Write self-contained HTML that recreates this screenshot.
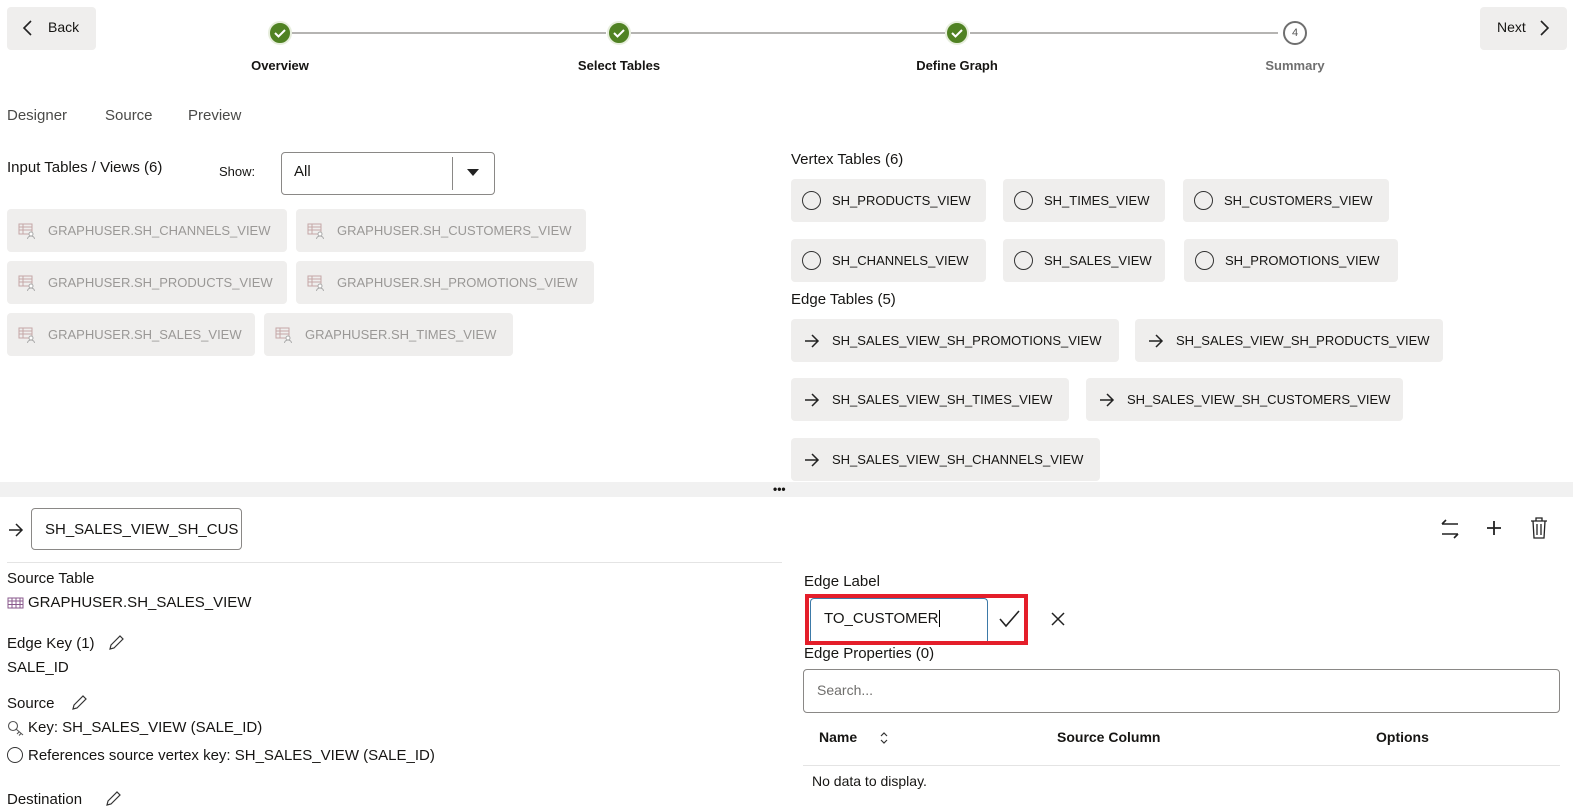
<!DOCTYPE html>
<html><head><meta charset="utf-8"><style>
*{margin:0;padding:0;box-sizing:border-box}
body{width:1573px;height:811px;overflow:hidden;background:#fff;font-family:"Liberation Sans",sans-serif;color:#161513;position:relative}
.a{position:absolute;white-space:nowrap}
.chip{position:absolute;background:#efeeed;border-radius:4px;height:43px;font-size:13px;display:flex;align-items:center;white-space:nowrap}
.in{color:#9a9896;padding-left:41px}
.in svg{position:absolute;left:11px;top:13px}
.v{padding-left:41px;color:#161513}
.v:before{content:"";position:absolute;left:11px;top:12px;width:17px;height:17px;border:1.4px solid #333;border-radius:50%}
.e{padding-left:41px}
.e svg{position:absolute;left:13px;top:15px}
.step{position:absolute;top:21px;width:24px;height:24px;border-radius:50%;background:#508223;border:2px solid #e7eedd}
.lbl{position:absolute;top:58px;font-size:13px;font-weight:bold;transform:translateX(-50%)}
.tf{font-size:15px}
</style></head><body>
<div class="a" style="left:7px;top:7px;width:89px;height:43px;background:#efeeed;border-radius:4px"></div>
<svg class="a" style="left:22px;top:19px" width="12" height="18"><path d="M9 2L2 9l7 7" fill="none" stroke="#222" stroke-width="1.6"/></svg>
<div class="a" style="left:48px;top:19px;font-size:14px">Back</div>
<div class="a" style="left:1480px;top:7px;width:87px;height:43px;background:#efeeed;border-radius:4px"></div>
<div class="a" style="left:1497px;top:19px;font-size:14px">Next</div>
<svg class="a" style="left:1538px;top:19px" width="12" height="18"><path d="M3 2l7 7-7 7" fill="none" stroke="#222" stroke-width="1.6"/></svg>
<div class="a" style="left:292px;top:32px;width:314px;height:2px;background:#b5b4b2"></div>
<div class="a" style="left:631px;top:32px;width:314px;height:2px;background:#b5b4b2"></div>
<div class="a" style="left:970px;top:32px;width:308px;height:2px;background:#b5b4b2"></div>
<div class="step" style="left:268px"></div><div class="step" style="left:607px"></div><div class="step" style="left:945px"></div>
<svg class="a" style="left:268px;top:21px" width="24" height="24"><path d="M7 12l3.5 3.5L17 9" fill="none" stroke="#fff" stroke-width="2"/></svg>
<svg class="a" style="left:607px;top:21px" width="24" height="24"><path d="M7 12l3.5 3.5L17 9" fill="none" stroke="#fff" stroke-width="2"/></svg>
<svg class="a" style="left:945px;top:21px" width="24" height="24"><path d="M7 12l3.5 3.5L17 9" fill="none" stroke="#fff" stroke-width="2"/></svg>
<div class="a" style="left:1283px;top:21px;width:24px;height:24px;border-radius:50%;border:2px solid #6f6f6f;font-size:11px;text-align:center;line-height:20px;color:#555">4</div>
<div class="lbl" style="left:280px">Overview</div>
<div class="lbl" style="left:619px">Select Tables</div>
<div class="lbl" style="left:957px">Define Graph</div>
<div class="lbl" style="left:1295px;color:#6f6f6f">Summary</div>
<div class="a" style="left:7px;top:107px;font-size:15px;color:#4a4a48">Designer</div>
<div class="a" style="left:105px;top:107px;font-size:15px;color:#4a4a48">Source</div>
<div class="a" style="left:188px;top:107px;font-size:15px;color:#4a4a48">Preview</div>
<div class="a tf" style="left:7px;top:159px">Input Tables / Views (6)</div>
<div class="a" style="left:219px;top:164px;font-size:13px">Show:</div>
<div class="a" style="left:281px;top:152px;width:214px;height:43px;border:1px solid #8a8886;border-radius:4px"></div>
<div class="a" style="left:294px;top:163px;font-size:15px">All</div>
<div class="a" style="left:452px;top:157px;width:1px;height:33px;background:#8a8886"></div>
<svg class="a" style="left:467px;top:169px" width="12" height="8"><path d="M0 0h12L6 7z" fill="#222"/></svg>
<svg width="0" height="0" style="position:absolute"><defs><symbol id="tb" viewBox="0 0 18 18"><path d="M1 2h13v10H1zM1 5h13M1 8h13M5 2v10" fill="none" stroke="#c4a7a6" stroke-width="1"/><circle cx="13" cy="12" r="2" fill="#fff" stroke="#aaa"/><path d="M9.5 17a3.5 3 0 017 0" fill="none" stroke="#aaa"/></symbol></defs></svg>
<div class="chip in" style="left:7px;top:209px;width:280px"><svg width="18" height="18"><use href="#tb"/></svg>GRAPHUSER.SH_CHANNELS_VIEW</div>
<div class="chip in" style="left:296px;top:209px;width:290px"><svg width="18" height="18"><use href="#tb"/></svg>GRAPHUSER.SH_CUSTOMERS_VIEW</div>
<div class="chip in" style="left:7px;top:261px;width:280px"><svg width="18" height="18"><use href="#tb"/></svg>GRAPHUSER.SH_PRODUCTS_VIEW</div>
<div class="chip in" style="left:296px;top:261px;width:298px"><svg width="18" height="18"><use href="#tb"/></svg>GRAPHUSER.SH_PROMOTIONS_VIEW</div>
<div class="chip in" style="left:7px;top:313px;width:248px"><svg width="18" height="18"><use href="#tb"/></svg>GRAPHUSER.SH_SALES_VIEW</div>
<div class="chip in" style="left:264px;top:313px;width:249px"><svg width="18" height="18"><use href="#tb"/></svg>GRAPHUSER.SH_TIMES_VIEW</div>
<div class="a tf" style="left:791px;top:151px">Vertex Tables (6)</div>
<div class="chip v" style="left:791px;top:179px;width:195px">SH_PRODUCTS_VIEW</div>
<div class="chip v" style="left:1003px;top:179px;width:162px">SH_TIMES_VIEW</div>
<div class="chip v" style="left:1183px;top:179px;width:206px">SH_CUSTOMERS_VIEW</div>
<div class="chip v" style="left:791px;top:239px;width:195px">SH_CHANNELS_VIEW</div>
<div class="chip v" style="left:1003px;top:239px;width:162px">SH_SALES_VIEW</div>
<div class="chip v" style="left:1184px;top:239px;width:214px">SH_PROMOTIONS_VIEW</div>
<div class="a tf" style="left:791px;top:291px">Edge Tables (5)</div>
<svg width="0" height="0" style="position:absolute"><defs><symbol id="ar" viewBox="0 0 16 14"><path d="M1 7h13M8 1l6 6-6 6" fill="none" stroke="#222" stroke-width="1.5"/></symbol></defs></svg>
<div class="chip e" style="left:791px;top:319px;width:328px"><svg width="16" height="14"><use href="#ar"/></svg>SH_SALES_VIEW_SH_PROMOTIONS_VIEW</div>
<div class="chip e" style="left:1135px;top:319px;width:308px"><svg width="16" height="14"><use href="#ar"/></svg>SH_SALES_VIEW_SH_PRODUCTS_VIEW</div>
<div class="chip e" style="left:791px;top:378px;width:278px"><svg width="16" height="14"><use href="#ar"/></svg>SH_SALES_VIEW_SH_TIMES_VIEW</div>
<div class="chip e" style="left:1086px;top:378px;width:317px"><svg width="16" height="14"><use href="#ar"/></svg>SH_SALES_VIEW_SH_CUSTOMERS_VIEW</div>
<div class="chip e" style="left:791px;top:438px;width:309px"><svg width="16" height="14"><use href="#ar"/></svg>SH_SALES_VIEW_SH_CHANNELS_VIEW</div>
<div class="a" style="left:0;top:482px;width:1573px;height:15px;background:#f1f1f1"></div>
<div class="a" style="left:773px;top:482px;font-size:12px;font-weight:bold;line-height:14px">•••</div>
<svg class="a" style="left:8px;top:523px" width="16" height="14"><use href="#ar"/></svg>
<div class="a" style="left:31px;top:508px;width:211px;height:42px;border:1px solid #8a8886;border-radius:4px;overflow:hidden;font-size:15px;padding:12px 0 0 13px">SH_SALES_VIEW_SH_CUS</div>
<div class="a" style="left:7px;top:562px;width:775px;height:1px;background:#e4e4e4"></div>
<svg class="a" style="left:1438px;top:517px" width="24" height="24"><path d="M4 7h16M4 7l4-4M20 17H4M20 17l-4 4" fill="none" stroke="#222" stroke-width="1.6"/></svg>
<svg class="a" style="left:1484px;top:518px" width="20" height="20"><path d="M10 3v14M3 10h14" stroke="#222" stroke-width="1.8"/></svg>
<svg class="a" style="left:1528px;top:516px" width="22" height="24"><path d="M3 5h16M8 5V2h6v3M5 5l1 17h10l1-17M9 8v11M13 8v11" fill="none" stroke="#222" stroke-width="1.3"/></svg>
<div class="a tf" style="left:7px;top:570px">Source Table</div>
<svg class="a" style="left:7px;top:597px" width="17" height="12"><path d="M1 1h15v10H1zM1 4h15M1 7.5h15M5 1v10M9 1v10M13 1v10" fill="none" stroke="#8a5a8c" stroke-width="1"/></svg>
<div class="a tf" style="left:28px;top:594px">GRAPHUSER.SH_SALES_VIEW</div>
<div class="a tf" style="left:7px;top:635px">Edge Key (1)</div>
<svg class="a" style="left:107px;top:634px" width="18" height="18"><path d="M3 15l1-4L13 2l3 3-9 9z" fill="none" stroke="#333" stroke-width="1.2"/></svg>
<div class="a tf" style="left:7px;top:659px">SALE_ID</div>
<div class="a tf" style="left:7px;top:695px">Source</div>
<svg class="a" style="left:70px;top:694px" width="18" height="18"><path d="M3 15l1-4L13 2l3 3-9 9z" fill="none" stroke="#333" stroke-width="1.2"/></svg>
<svg class="a" style="left:7px;top:720px" width="17" height="17"><circle cx="6" cy="6" r="4.5" fill="none" stroke="#555" stroke-width="1.1"/><path d="M9 9l7 6M12 12l-2 2M14 13.5l-2 2" fill="none" stroke="#555" stroke-width="1.1"/></svg>
<div class="a tf" style="left:28px;top:719px">Key: SH_SALES_VIEW (SALE_ID)</div>
<div class="a" style="left:7px;top:747px;width:16px;height:16px;border:1.3px solid #333;border-radius:50%"></div>
<div class="a tf" style="left:28px;top:747px">References source vertex key: SH_SALES_VIEW (SALE_ID)</div>
<div class="a tf" style="left:7px;top:791px">Destination</div>
<svg class="a" style="left:104px;top:790px" width="18" height="18"><path d="M3 15l1-4L13 2l3 3-9 9z" fill="none" stroke="#333" stroke-width="1.2"/></svg>
<div class="a tf" style="left:804px;top:573px">Edge Label</div>
<div class="a" style="left:805px;top:594px;width:223px;height:51px;border:4px solid #e41e2a"></div>
<div class="a" style="left:810px;top:598px;width:178px;height:43px;border:1px solid #3d7aa8;border-bottom:none;border-radius:4px 4px 0 0;font-size:15px;padding:11px 0 0 13px">TO_CUSTOMER<span style="border-left:1px solid #000;margin-left:1px"></span></div>
<svg class="a" style="left:998px;top:609px" width="24" height="20"><path d="M2 10l6 7L21 2" fill="none" stroke="#222" stroke-width="1.6"/></svg>
<svg class="a" style="left:1050px;top:611px" width="16" height="16"><path d="M2 2l12 12M14 2L2 14" stroke="#222" stroke-width="1.5"/></svg>
<div class="a tf" style="left:804px;top:645px">Edge Properties (0)</div>
<div class="a" style="left:803px;top:669px;width:757px;height:44px;border:1px solid #8a8886;border-radius:4px"></div>
<div class="a" style="left:817px;top:682px;font-size:14px;color:#6f6e6c">Search...</div>
<div class="a" style="left:819px;top:729px;font-size:14px;font-weight:bold">Name</div>
<svg class="a" style="left:879px;top:730px" width="10" height="16"><path d="M2 6l3-3 3 3M2 10l3 3 3-3" fill="none" stroke="#333" stroke-width="1.2"/></svg>
<div class="a" style="left:1057px;top:729px;font-size:14px;font-weight:bold">Source Column</div>
<div class="a" style="left:1376px;top:729px;font-size:14px;font-weight:bold">Options</div>
<div class="a" style="left:803px;top:765px;width:757px;height:1px;background:#e4e4e4"></div>
<div class="a" style="left:812px;top:773px;font-size:14px">No data to display.</div>
</body></html>
